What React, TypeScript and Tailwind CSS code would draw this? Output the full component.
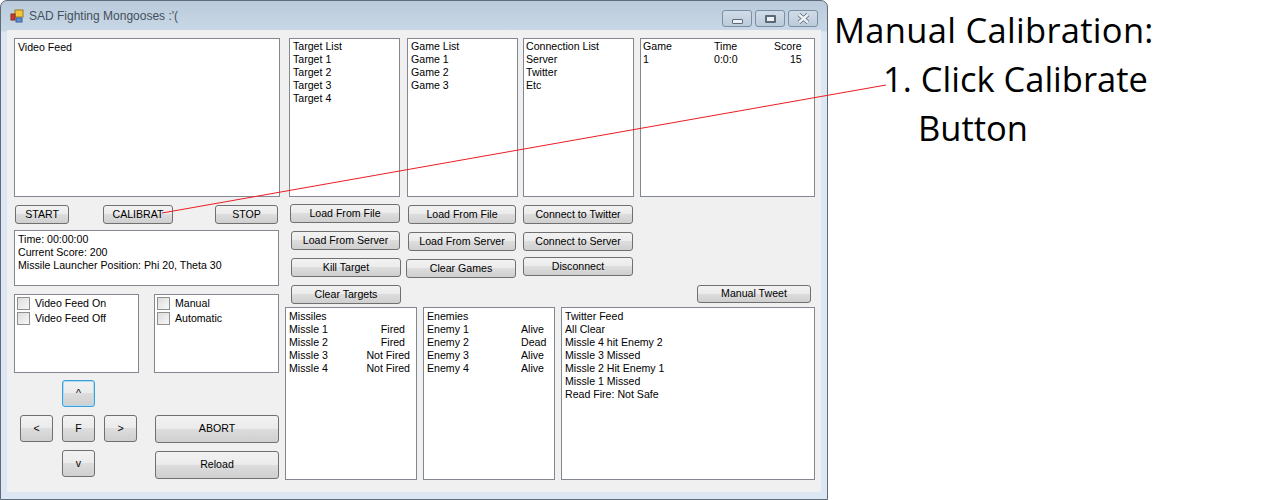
const LINE = "leading-[13px]";

function Btn({ label, className = "" }: { label: string; className?: string }) {
  return (
    <button
      type="button"
      className={`flex items-center justify-center rounded-[3px] border border-[#707070] bg-[linear-gradient(#f2f2f2_0%,#ebebeb_48%,#dddddd_50%,#cfcfcf_100%)] text-[10.6px] text-black ${className}`}
    >
      {label}
    </button>
  );
}

function Box({ lines, className = "" }: { lines: string[]; className?: string }) {
  return (
    <div className={`border border-[#828790] bg-white px-[3px] pt-[2px] text-[10.6px] text-black ${LINE} ${className}`}>
      {lines.map((l) => (
        <div key={l}>{l}</div>
      ))}
    </div>
  );
}

function Check({ label }: { label: string }) {
  return (
    <label className="flex h-[15px] items-center gap-[5px]">
      <span className="h-[13px] w-[13px] border border-[#8e8f8f] bg-[linear-gradient(135deg,#dcdcdc,#f8f8f8)]" />
      <span>{label}</span>
    </label>
  );
}

function CaptionBtn({ children }: { children: React.ReactNode }) {
  return (
    <div className="flex h-[17px] w-[30px] items-center justify-center rounded-[3px] border border-[#7d8ea2] bg-[linear-gradient(#d0dce8,#bccbdb)]">
      {children}
    </div>
  );
}

export default function App() {
  return (
    <div className="relative flex h-[500px] w-[1262px] overflow-hidden bg-white font-['Liberation_Sans',Arial,sans-serif]">
      <div className="flex h-[500px] w-[828px] shrink-0 flex-col rounded-t-[7px] border border-[#5f6b78] bg-[linear-gradient(#b9cadb_0%,#c9d8e6_30px,#dce7f3_31px)] px-[6px] pb-[7px]">
        <div className="flex h-[29px] shrink-0 items-center pl-[3px] pr-[3px]">
          <svg width="14" height="14" viewBox="0 0 14 14" className="mr-[5px]">
            <rect x="5" y="1" width="8" height="7" fill="#f3c63c" stroke="#9a7a20" />
            <rect x="1" y="5" width="4" height="6" fill="#d03a2c" stroke="#8a2a20" />
            <rect x="6" y="9" width="6" height="4" fill="#5b8fd6" stroke="#3a5f96" />
          </svg>
          <span className="text-[12px] text-[#44505c]">SAD Fighting Mongooses :&#39;(</span>
          <div className="ml-auto flex gap-[3px] self-start pt-[9px]">
            <CaptionBtn>
              <span className="mt-[5px] h-[5px] w-[11px] rounded-[1px] border border-[#5a6878] bg-[#eef2f6]" />
            </CaptionBtn>
            <CaptionBtn>
              <span className="h-[8px] w-[11px] rounded-[1px] border-2 border-[#5a6878] bg-[#eef2f6]" />
            </CaptionBtn>
            <CaptionBtn>
              <svg width="13" height="11" viewBox="0 0 13 11">
                <path d="M2 1.5 11 9.5M11 1.5 2 9.5" stroke="#5a6878" strokeWidth="4" />
                <path d="M2 1.5 11 9.5M11 1.5 2 9.5" stroke="#eef2f6" strokeWidth="2.4" />
              </svg>
            </CaptionBtn>
          </div>
        </div>

        <div className="flex min-h-0 flex-1 bg-[#f0f0f0] pl-[7px] pt-[8px] text-[10.6px] text-black">
          {/* left column */}
          <div className="flex w-[266px] shrink-0 flex-col">
            <Box lines={["Video Feed"]} className="h-[159px]" />
            <div className="mt-[8px] flex pl-[1px]">
              <Btn label="START" className="h-[19px] w-[54px]" />
              <Btn label="CALIBRAT" className="ml-[34px] h-[19px] w-[70px]" />
              <Btn label="STOP" className="ml-[42px] h-[19px] w-[63px]" />
            </div>
            <Box
              lines={["Time: 00:00:00", "Current Score: 200", "Missile Launcher Position: Phi 20, Theta 30"]}
              className="mt-[6px] h-[56px] w-[265px]"
            />
            <div className="mt-[8px] flex w-[265px] justify-between">
              <div className="h-[79px] w-[125px] border border-[#828790] bg-white px-[2px] pt-[1px]">
                <Check label="Video Feed On" />
                <Check label="Video Feed Off" />
              </div>
              <div className="h-[79px] w-[125px] border border-[#828790] bg-white px-[2px] pt-[1px]">
                <Check label="Manual" />
                <Check label="Automatic" />
              </div>
            </div>
            <div className="mt-[7px] flex w-[265px]">
              <div className="ml-[6px] grid w-[116px] grid-cols-[33px_33px_33px] grid-rows-[27px_27px_27px] gap-x-[9px] gap-y-[8px]">
                <Btn
                  label="^"
                  className="col-start-2 !border-[#3c9fd8] shadow-[inset_0_0_0_1px_#a9dcf5]"
                />
                <Btn label="<" className="col-start-1 row-start-2" />
                <Btn label="F" className="col-start-2 row-start-2" />
                <Btn label=">" className="col-start-3 row-start-2" />
                <Btn label="v" className="col-start-2 row-start-3" />
              </div>
              <div className="ml-[19px] flex flex-1 flex-col gap-[8px] pt-[35px]">
                <Btn label="ABORT" className="h-[28px] w-[124px]" />
                <Btn label="Reload" className="h-[28px] w-[124px]" />
              </div>
            </div>
          </div>

          {/* right part */}
          <div className="ml-[9px] flex flex-1 flex-col">
            <div className="flex h-[159px] gap-[7px]">
              <Box className="w-[111px] !pt-[1px]" lines={["Target List", "Target 1", "Target 2", "Target 3", "Target 4"]} />
              <Box className="w-[111px] !pt-[1px]" lines={["Game List", "Game 1", "Game 2", "Game 3"]} />
              <Box className="ml-[-2px] w-[111px] !px-[2px] !pt-[1px]" lines={["Connection List", "Server", "Twitter", "Etc"]} />
              <div className="ml-[-1px] w-[175px] border border-[#828790] bg-white px-[2px] pt-[1px] leading-[13px]">
                <div className="grid grid-cols-[71px_60px_1fr]">
                  <span>Game</span>
                  <span>Time</span>
                  <span className="pr-[12px] text-right">Score</span>
                  <span>1</span>
                  <span>0:0:0</span>
                  <span className="pr-[12px] text-right">15</span>
                </div>
              </div>
            </div>

            <div className="mt-[7px] flex h-[99px] items-start">
              <div className="ml-[1px] flex w-[111px] flex-col gap-[8px]">
                <Btn label="Load From File" className="h-[19px] w-[110px]" />
                <Btn label="Load From Server" className="ml-[1px] h-[19px] w-[109px]" />
                <Btn label="Kill Target" className="ml-[1px] h-[19px] w-[110px]" />
                <Btn label="Clear Targets" className="ml-[1px] h-[19px] w-[110px]" />
              </div>
              <div className="ml-[5px] mt-[1px] flex w-[110px] flex-col items-end gap-[8px]">
                <Btn label="Load From File" className="h-[19px] w-[108px]" />
                <Btn label="Load From Server" className="h-[19px] w-[108px]" />
                <Btn label="Clear Games" className="h-[19px] w-[110px]" />
              </div>
              <div className="ml-[7px] mt-[1px] flex w-[110px] flex-col gap-[8px]">
                <Btn label="Connect to Twitter" className="h-[19px] w-[110px]" />
                <Btn label="Connect to Server" className="h-[19px] w-[110px]" />
                <Btn label="Disconnect" className="-mt-[2px] h-[19px] w-[110px]" />
              </div>
              <Btn label="Manual Tweet" className="ml-[64px] mt-[81px] h-[18px] w-[114px]" />
            </div>

            <div className="ml-[-4px] mt-[4px] flex h-[173px] gap-[6px]">
              <div className="w-[132px] border border-[#828790] bg-white px-[3px] pt-[2px] leading-[13px]">
                <div>Missiles</div>
                {[
                  ["Missle 1", "Fired", "pr-[8px]"],
                  ["Missle 2", "Fired", "pr-[8px]"],
                  ["Missle 3", "Not Fired", "pr-[3px]"],
                  ["Missle 4", "Not Fired", "pr-[3px]"],
                ].map(([a, b, pad]) => (
                  <div key={a} className="flex justify-between">
                    <span>{a}</span>
                    <span className={pad}>{b}</span>
                  </div>
                ))}
              </div>
              <div className="w-[132px] border border-[#828790] bg-white px-[3px] pt-[2px] leading-[13px]">
                <div>Enemies</div>
                {[
                  ["Enemy 1", "Alive"],
                  ["Enemy 2", "Dead"],
                  ["Enemy 3", "Alive"],
                  ["Enemy 4", "Alive"],
                ].map(([a, b]) => (
                  <div key={a} className="grid grid-cols-[94px_1fr]">
                    <span>{a}</span>
                    <span>{b}</span>
                  </div>
                ))}
              </div>
              <Box
                className="w-[254px]"
                lines={[
                  "Twitter Feed",
                  "All Clear",
                  "Missle 4 hit Enemy 2",
                  "Missle 3 Missed",
                  "Missle 2 Hit Enemy 1",
                  "Missle 1 Missed",
                  "Read Fire: Not Safe",
                ]}
              />
            </div>
          </div>
        </div>
      </div>

      <div className="ml-[6px] pt-[5px] font-['Open_Sans',sans-serif] text-[34.5px] leading-[49px] text-black">
        <div className="tracking-[0.3px]">Manual Calibration:</div>
        <div className="pl-[49px]">1. Click Calibrate</div>
        <div className="pl-[84px]">Button</div>
      </div>

      {/* annotation leader, runs over the form */}
      <svg className="pointer-events-none absolute left-0 top-0" width="1262" height="500">
        <line x1="162" y1="213" x2="886" y2="85" stroke="#ed1c24" strokeWidth="1" />
      </svg>
    </div>
  );
}
